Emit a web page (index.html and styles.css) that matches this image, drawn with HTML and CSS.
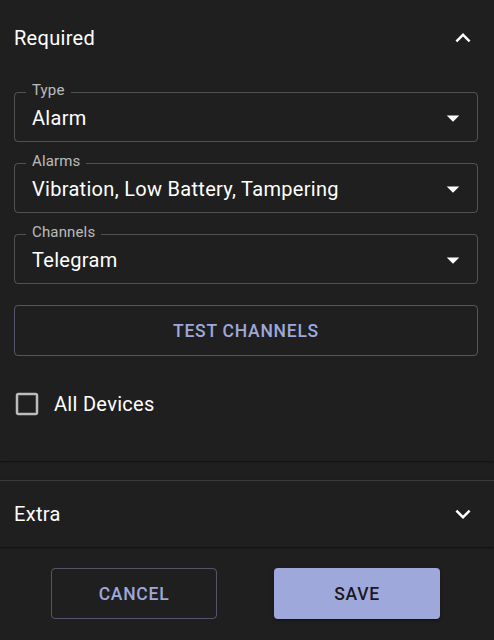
FILE: index.html
```html
<!DOCTYPE html>
<html lang="en">
<head>
<meta charset="utf-8">
<title>Notification</title>
<link rel="stylesheet" href="styles.css">
</head>
<body>
<div class="dialog">
  <div class="dialog-content">
    <section class="accordion expanded">
      <div class="summary">
        <span class="summary-title">Required</span>
        <svg class="icon" viewBox="0 0 24 24"><path d="M12 8l-6 6 1.41 1.41L12 10.83l4.59 4.58L18 14z"/></svg>
      </div>
      <div class="details">
        <fieldset class="field">
          <legend>Type</legend>
          <div class="select">
            <span class="select-value">Alarm</span>
            <svg class="icon" viewBox="0 0 24 24"><path d="M7 10l5 5 5-5z"/></svg>
          </div>
        </fieldset>
        <fieldset class="field">
          <legend>Alarms</legend>
          <div class="select">
            <span class="select-value">Vibration, Low Battery, Tampering</span>
            <svg class="icon" viewBox="0 0 24 24"><path d="M7 10l5 5 5-5z"/></svg>
          </div>
        </fieldset>
        <fieldset class="field">
          <legend>Channels</legend>
          <div class="select">
            <span class="select-value">Telegram</span>
            <svg class="icon" viewBox="0 0 24 24"><path d="M7 10l5 5 5-5z"/></svg>
          </div>
        </fieldset>
        <button class="btn btn-outlined btn-full">Test Channels</button>
        <label class="check-row">
          <svg class="checkbox" viewBox="0 0 24 24"><path d="M19 5v14H5V5h14m0-2H5c-1.11 0-2 .9-2 2v14c0 1.1.89 2 2 2h14c1.1 0 2-.9 2-2V5c0-1.1-.9-2-2-2z"/></svg>
          <span class="check-label">All Devices</span>
        </label>
      </div>
    </section>
    <section class="accordion collapsed">
      <div class="summary summary-collapsed">
        <span class="summary-title">Extra</span>
        <svg class="icon" viewBox="0 0 24 24"><path d="M16.59 8.59 12 13.17 7.41 8.59 6 10l6 6 6-6z"/></svg>
      </div>
    </section>
  </div>
  <div class="dialog-actions">
    <button class="btn btn-outlined btn-action">Cancel</button>
    <button class="btn btn-contained btn-action">Save</button>
  </div>
</div>
</body>
</html>
```
FILE: styles.css
```css
* { box-sizing: border-box; }

html, body {
  margin: 0;
  padding: 0;
  background: #1f1f1f;
  color: #fff;
  font-family: Roboto, "Liberation Sans", sans-serif;
  font-size: 20px;
}

.dialog {
  width: 494px;
  height: 640px;
  display: flex;
  flex-direction: column;
  overflow: hidden;
}

.dialog-content {
  padding-top: 6px;
}

.accordion {
  background: #1f1f1f;
  box-shadow: 0 2px 1px -1px rgba(0,0,0,0.2), 0 1px 1px 0 rgba(0,0,0,0.14), 0 1px 3px 0 rgba(0,0,0,0.12);
}

.accordion.expanded {
  margin-bottom: 19px;
}

.accordion.collapsed {
  border-top: 1px solid rgba(255,255,255,0.12);
}

.summary {
  height: 64px;
  padding: 0 16px 0 14px;
  display: flex;
  align-items: center;
  justify-content: space-between;
}

.summary-collapsed {
  height: 66px;
}

.summary-title {
  font-size: 20px;
  line-height: 30px;
  letter-spacing: 0.3px;
}

.icon {
  width: 30px;
  height: 30px;
  fill: #fff;
  flex: none;
}

.details {
  padding: 12px 16px 42px 14px;
  display: flex;
  flex-direction: column;
}

.field {
  margin: 0 0 11px 0;
  padding: 0 9px 8px 11px;
  border: 1px solid rgba(255,255,255,0.23);
  border-radius: 4px;
  min-width: 0;
}

.field legend {
  padding: 0 6px 4px 6px;
  font-size: 15px;
  line-height: 17px;
  letter-spacing: 0.15px;
  color: rgba(255,255,255,0.7);
}

.select {
  display: flex;
  align-items: center;
  justify-content: space-between;
  height: 30px;
  padding-left: 6px;
}

.select-value {
  font-size: 20px;
  line-height: 30px;
  letter-spacing: 0.3px;
  white-space: nowrap;
}

.btn {
  font-family: inherit;
  font-size: 17.5px;
  font-weight: 500;
  letter-spacing: 0.75px;
  text-transform: uppercase;
  border-radius: 4px;
  height: 51px;
  cursor: pointer;
}

.btn-outlined {
  background: transparent;
  color: #9fa8da;
  border: 1px solid rgba(159,168,218,0.4);
}

.btn-contained {
  background: #9fa8da;
  color: rgba(0,0,0,0.87);
  border: none;
  box-shadow: 0 3px 1px -2px rgba(0,0,0,0.2), 0 2px 2px 0 rgba(0,0,0,0.14), 0 1px 5px 0 rgba(0,0,0,0.12);
}

.btn-full {
  width: 100%;
  margin-top: 10px;
}

.check-row {
  display: flex;
  align-items: center;
  gap: 12px;
  margin-top: 33px;
}

.checkbox {
  width: 30px;
  height: 30px;
  fill: rgba(255,255,255,0.7);
  margin-left: -2px;
}

.check-label {
  font-size: 20px;
  line-height: 30px;
  letter-spacing: 0.3px;
}

.dialog-actions {
  flex: 1;
  display: flex;
  align-items: flex-start;
  padding: 21px 0 0 51px;
  gap: 57px;
}

.btn-action {
  width: 166px;
}
```
